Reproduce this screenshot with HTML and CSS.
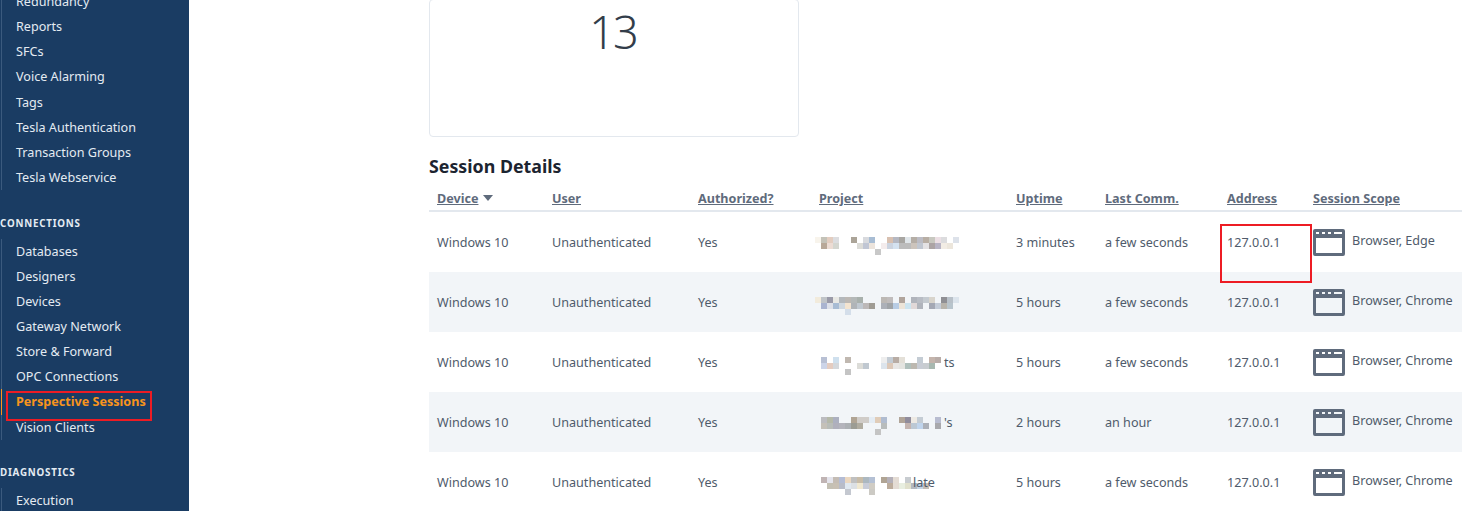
FILE: index.html
```html
<!DOCTYPE html>
<html lang="en">
<head>
<meta charset="UTF-8" />
<title>Perspective Sessions</title>
<link rel="stylesheet" href="styles.css">
</head>
<body>
  <svg class="defs"><symbol id="window" viewBox="0 0 32 27"><path fill-rule="evenodd" d="M2 0h28a2 2 0 0 1 2 2v23a2 2 0 0 1-2 2H2a2 2 0 0 1-2-2V2a2 2 0 0 1 2-2zM3 3v2h3V3zM9 3v2h3V3zM15 3v2h3V3zM21 3v2h8V3zM3 9v15h26V9z"/></symbol></svg>

  <!-- SIDEBAR -->
  <nav class="sidebar">
    <ul class="nav-list first">
      <li>Redundancy</li>
      <li>Reports</li>
      <li>SFCs</li>
      <li>Voice Alarming</li>
      <li>Tags</li>
      <li>Tesla Authentication</li>
      <li>Transaction Groups</li>
      <li>Tesla Webservice</li>
    </ul>
    <div class="nav-title">CONNECTIONS</div>
    <ul class="nav-list">
      <li>Databases</li>
      <li>Designers</li>
      <li>Devices</li>
      <li>Gateway Network</li>
      <li>Store &amp; Forward</li>
      <li>OPC Connections</li>
      <li class="active">Perspective Sessions<span class="mark mark-nav"></span></li>
      <li>Vision Clients</li>
    </ul>
    <div class="nav-title">DIAGNOSTICS</div>
    <ul class="nav-list">
      <li>Execution</li>
    </ul>
  </nav>

  <!-- MAIN -->
  <main class="content">
    <div class="card"><span class="card-value">13</span></div>
    <h2 class="section-title">Session Details</h2>

    <table class="sessions">
      <colgroup>
        <col class="c-device"><col class="c-user"><col class="c-auth"><col class="c-project">
        <col class="c-uptime"><col class="c-comm"><col class="c-addr"><col class="c-scope">
      </colgroup>
      <thead>
        <tr>
          <th><a>Device</a><span class="sort"></span></th>
          <th><a>User</a></th>
          <th><a>Authorized?</a></th>
          <th><a>Project</a></th>
          <th><a>Uptime</a></th>
          <th><a>Last Comm.</a></th>
          <th><a>Address</a></th>
          <th><a>Session Scope</a></th>
        </tr>
      </thead>
      <tbody>
        <tr>
          <td>Windows 10</td><td>Unauthenticated</td><td>Yes</td>
          <td class="project">
            <svg class="mosaic" width="144" height="18" viewBox="0 0 144 18">
              <rect x="0" y="0" fill="#f8f4ec"/><rect x="6" y="0" fill="#c4c2b8"/><rect x="12" y="0" fill="#e3cdc0"/><rect x="18" y="0" fill="#dcdde0"/><rect x="36" y="0" fill="#aba498"/><rect x="48" y="0" fill="#d8dade"/><rect x="54" y="0" fill="#a8bdd4"/><rect x="72" y="0" fill="#d8c0b0"/><rect x="78" y="0" fill="#b5b8c2"/><rect x="84" y="0" fill="#a8a6a2"/><rect x="90" y="0" fill="#e0e6ea"/><rect x="96" y="0" fill="#b5aea6"/><rect x="102" y="0" fill="#bcbcc4"/><rect x="108" y="0" fill="#b8aea4"/><rect x="114" y="0" fill="#c8c8c0"/><rect x="120" y="0" fill="#ecdfe4"/><rect x="126" y="0" fill="#dcdcde"/><rect x="138" y="0" fill="#dde2ea"/>
              <rect x="6" y="6" fill="#b8a898"/><rect x="12" y="6" fill="#ecdcd4"/><rect x="18" y="6" fill="#d4d6d0"/><rect x="42" y="6" fill="#dcdcd8"/><rect x="48" y="6" fill="#c0c6d4"/><rect x="54" y="6" fill="#ece4dc"/><rect x="66" y="6" fill="#f4ecec"/><rect x="72" y="6" fill="#ccd4e0"/><rect x="78" y="6" fill="#d4e2f0"/><rect x="84" y="6" fill="#bcbcbc"/><rect x="90" y="6" fill="#bcbcbc"/><rect x="96" y="6" fill="#ccc4bc"/><rect x="102" y="6" fill="#c0c6d0"/><rect x="108" y="6" fill="#e4e2e4"/><rect x="114" y="6" fill="#aca4a4"/><rect x="120" y="6" fill="#b8b4c4"/><rect x="126" y="6" fill="#f2ece4"/><rect x="132" y="6" fill="#ece6dc"/>
              <rect x="60" y="12" fill="#c8c8c8"/>
            </svg>
          </td>
          <td>3 minutes</td><td>a few seconds</td><td class="addr">127.0.0.1<span class="mark mark-addr"></span></td>
          <td><div class="scope"><svg class="window"><use href="#window"/></svg><span>Browser, Edge</span></div></td>
        </tr>
        <tr>
          <td>Windows 10</td><td>Unauthenticated</td><td>Yes</td>
          <td class="project">
            <svg class="mosaic" width="144" height="18" viewBox="0 0 144 18">
              <rect x="0" y="0" fill="#f2ebdc"/><rect x="6" y="0" fill="#c0c4c8"/><rect x="12" y="0" fill="#9a9aa8"/><rect x="18" y="0" fill="#e8e8e4"/><rect x="24" y="0" fill="#b4b8bc"/><rect x="30" y="0" fill="#bcb8b4"/><rect x="36" y="0" fill="#b4b8b8"/><rect x="42" y="0" fill="#a8b0ac"/><rect x="66" y="0" fill="#bcb8b4"/><rect x="72" y="0" fill="#c0bcbc"/><rect x="84" y="0" fill="#b0a49c"/><rect x="96" y="0" fill="#b0b4bc"/><rect x="102" y="0" fill="#b8bcc4"/><rect x="108" y="0" fill="#c4cad0"/><rect x="114" y="0" fill="#d8d4cc"/><rect x="126" y="0" fill="#8f8f94"/><rect x="132" y="0" fill="#b8c0c8"/><rect x="138" y="0" fill="#dce4ec"/>
              <rect x="6" y="6" fill="#aab4d0"/><rect x="12" y="6" fill="#dde0e8"/><rect x="18" y="6" fill="#a8bcd4"/><rect x="24" y="6" fill="#d0d8e0"/><rect x="30" y="6" fill="#f4e4d0"/><rect x="36" y="6" fill="#b0b4b8"/><rect x="42" y="6" fill="#c0c8d0"/><rect x="48" y="6" fill="#bcb8b8"/><rect x="54" y="6" fill="#a09c94"/><rect x="66" y="6" fill="#acb0b8"/><rect x="72" y="6" fill="#a0a4a8"/><rect x="78" y="6" fill="#b8cce4"/><rect x="84" y="6" fill="#ece4d8"/><rect x="90" y="6" fill="#cce4f0"/><rect x="96" y="6" fill="#e0d8d8"/><rect x="102" y="6" fill="#b0b4bc"/><rect x="114" y="6" fill="#a4a8b4"/><rect x="120" y="6" fill="#c4ccd8"/><rect x="126" y="6" fill="#b8b4ac"/><rect x="132" y="6" fill="#b8c4cc"/>
              <rect x="30" y="12" fill="#d4deea"/>
            </svg>
          </td>
          <td>5 hours</td><td>a few seconds</td><td>127.0.0.1</td>
          <td><div class="scope"><svg class="window"><use href="#window"/></svg><span>Browser, Chrome</span></div></td>
        </tr>
        <tr>
          <td>Windows 10</td><td>Unauthenticated</td><td>Yes</td>
          <td class="project">
            <svg class="mosaic" width="126" height="18" viewBox="0 0 126 18">
              <rect x="6" y="0" fill="#b8c0d4"/><rect x="18" y="0" fill="#cfe0ee"/><rect x="30" y="0" fill="#c0b8b0"/><rect x="66" y="0" fill="#eeeeee"/><rect x="72" y="0" fill="#c4ccd4"/><rect x="78" y="0" fill="#b8aca4"/><rect x="84" y="0" fill="#e4e0d8"/><rect x="102" y="0" fill="#c4ccd4"/><rect x="114" y="0" fill="#c4b4ac"/><rect x="120" y="0" fill="#b8aca8"/>
              <rect x="6" y="6" fill="#ccd4e8"/><rect x="12" y="6" fill="#e4ccc0"/><rect x="18" y="6" fill="#d4d8dc"/><rect x="42" y="6" fill="#dcdcd8"/><rect x="48" y="6" fill="#c0c8d0"/><rect x="66" y="6" fill="#dce4ec"/><rect x="72" y="6" fill="#dcc8b8"/><rect x="78" y="6" fill="#e8e6e4"/><rect x="84" y="6" fill="#e4e4e0"/><rect x="90" y="6" fill="#b0c0bc"/><rect x="96" y="6" fill="#bcb8b0"/><rect x="102" y="6" fill="#c8ccd4"/><rect x="108" y="6" fill="#c8ccd0"/><rect x="114" y="6" fill="#a8b8b0"/>
              <rect x="30" y="12" fill="#c4c4c4"/>
            </svg><span class="leak">ts</span>
          </td>
          <td>5 hours</td><td>a few seconds</td><td>127.0.0.1</td>
          <td><div class="scope"><svg class="window"><use href="#window"/></svg><span>Browser, Chrome</span></div></td>
        </tr>
        <tr>
          <td>Windows 10</td><td>Unauthenticated</td><td>Yes</td>
          <td class="project">
            <svg class="mosaic" width="126" height="18" viewBox="0 0 126 18">
              <rect x="6" y="0" fill="#bcbcc0"/><rect x="12" y="0" fill="#b4b8a8"/><rect x="18" y="0" fill="#acb0c0"/><rect x="36" y="0" fill="#b0a494"/><rect x="42" y="0" fill="#d0ccc8"/><rect x="48" y="0" fill="#d0ccc8"/><rect x="54" y="0" fill="#e4ecf4"/><rect x="60" y="0" fill="#e0ccb8"/><rect x="66" y="0" fill="#b0bcd0"/><rect x="84" y="0" fill="#b0a498"/><rect x="90" y="0" fill="#908c9c"/><rect x="96" y="0" fill="#eeeae4"/><rect x="102" y="0" fill="#c4ccd4"/><rect x="120" y="0" fill="#b8bcd0"/>
              <rect x="6" y="6" fill="#c4c0b8"/><rect x="12" y="6" fill="#b8bcb8"/><rect x="18" y="6" fill="#b0b0bc"/><rect x="24" y="6" fill="#b4b4bc"/><rect x="30" y="6" fill="#acb0b4"/><rect x="36" y="6" fill="#9c9c94"/><rect x="42" y="6" fill="#b0aca0"/><rect x="66" y="6" fill="#b8bcbc"/><rect x="90" y="6" fill="#c4b4b0"/><rect x="96" y="6" fill="#bcc8d4"/><rect x="102" y="6" fill="#c0d4ec"/><rect x="108" y="6" fill="#acb0b8"/><rect x="120" y="6" fill="#a8a8ac"/>
              <rect x="60" y="12" fill="#c4c4c4"/>
            </svg><span class="leak">'s</span>
          </td>
          <td>2 hours</td><td>an hour</td><td>127.0.0.1</td>
          <td><div class="scope"><svg class="window"><use href="#window"/></svg><span>Browser, Chrome</span></div></td>
        </tr>
        <tr>
          <td>Windows 10</td><td>Unauthenticated</td><td>Yes</td>
          <td class="project">
            <svg class="mosaic" width="120" height="18" viewBox="0 0 120 18">
              <rect x="6" y="0" fill="#c0b4b4"/><rect x="12" y="0" fill="#e4e4ec"/><rect x="18" y="0" fill="#c4bcb4"/><rect x="24" y="0" fill="#b4bcd4"/><rect x="30" y="0" fill="#ecd8c0"/><rect x="36" y="0" fill="#c0c0c0"/><rect x="42" y="0" fill="#c8bca8"/><rect x="48" y="0" fill="#acb8c0"/><rect x="54" y="0" fill="#b4c0d4"/><rect x="66" y="0" fill="#b0a494"/><rect x="72" y="0" fill="#b4b0b8"/><rect x="78" y="0" fill="#e4dcd4"/><rect x="90" y="0" fill="#c8ccd0"/>
              <rect x="12" y="6" fill="#c4c0b4"/><rect x="18" y="6" fill="#c8c0b4"/><rect x="24" y="6" fill="#b8bcc8"/><rect x="30" y="6" fill="#e0e8f0"/><rect x="36" y="6" fill="#dce0e4"/><rect x="42" y="6" fill="#f0e8d0"/><rect x="48" y="6" fill="#c8ccd8"/><rect x="54" y="6" fill="#d0ccc4"/><rect x="72" y="6" fill="#bcac9c"/><rect x="78" y="6" fill="#e4dcd4"/><rect x="84" y="6" fill="#e8eee0"/><rect x="90" y="6" fill="#e0e0cc"/><rect x="96" y="6" fill="#b4b8c0"/><rect x="102" y="6" fill="#c4d4e4"/><rect x="108" y="6" fill="#c4bcb4"/>
              <rect x="30" y="12" fill="#c4c8d0"/><rect x="54" y="12" fill="#cccac4"/>
            </svg><span class="leak leak-over">late</span>
          </td>
          <td>5 hours</td><td>a few seconds</td><td>127.0.0.1</td>
          <td><div class="scope"><svg class="window"><use href="#window"/></svg><span>Browser, Chrome</span></div></td>
        </tr>
      </tbody>
    </table>
  </main>
</body>
</html>
```

FILE: styles.css
```css
:root {
  --navy: #1a3c63;
  --text: #4f5b6b;
  --slate: #5f6b7c;
  --stripe: #f2f5f8;
  --line: #e3e8ee;
  --red: #ed1c24;
  --font: 'Noto Sans', sans-serif;
}

* {
  box-sizing: border-box;
}

html,
body {
  margin: 0;
  padding: 0;
  height: 511px;
  overflow: hidden;
  background: #fff;
  font-family: var(--font);
  font-size: 12.6px;
  color: var(--text);
}

body {
  display: flex;
}

.defs { display: none; }

/* ------------ SIDEBAR ------------- */
.sidebar {
  flex: 0 0 189px;
  height: 511px;
  overflow: hidden;
  background: var(--navy);
  color: #e4ebf2;
}

.nav-list {
  list-style: none;
  margin: 0 0 0 1px;
  padding: 0;
  border-left: 1px solid #3b5a7e;
}
.nav-list.first { margin-top: -11px; }
.nav-list li {
  position: relative;
  height: 25.15px;
  line-height: 25px;
  padding-left: 14px;
  white-space: nowrap;
}
.nav-list li.active {
  color: #f7941d;
  font-weight: 700;
  box-shadow: -1px 0 0 #f7941d;
}

.nav-title {
  height: 33px;
  margin-top: 16.5px;
  margin-bottom: -1px;
  line-height: 33px;
  font-size: 9.8px;
  font-weight: 700;
  letter-spacing: 0.08em;
  white-space: nowrap;
}

/* red annotation boxes */
.mark {
  position: absolute;
  border: 2px solid var(--red);
  pointer-events: none;
}
.mark-nav {
  left: 4px;
  top: 2px;
  width: 146px;
  height: 30px;
}
.mark-addr {
  left: 1px;
  top: 12px;
  width: 92px;
  height: 59px;
}

/* ------------ MAIN ------------- */
.content {
  flex: 1;
  min-width: 0;
  padding-left: 240px;
}

.card {
  width: 370px;
  height: 138px;
  margin-top: -1px;
  padding-right: 2px;
  border: 1px solid var(--line);
  border-radius: 4px;
  text-align: center;
}
.card-value {
  display: block;
  font-size: 45px;
  font-weight: 300;
  line-height: 64px;
  letter-spacing: -2px;
  color: #333d4a;
}

.section-title {
  margin: 16px 0 0;
  height: 27px;
  line-height: 27px;
  font-size: 17.8px;
  font-weight: 700;
  color: #1c2430;
}

.sessions {
  width: 1033px;
  table-layout: fixed;
  border-collapse: separate;
  border-spacing: 0;
}
.c-device { width: 115px; }
.c-user { width: 146px; }
.c-auth { width: 121px; }
.c-project { width: 197px; }
.c-uptime { width: 89px; }
.c-comm { width: 122px; }
.c-addr { width: 86px; }
.c-scope { width: 157px; }

.sessions th {
  height: 32px;
  padding: 7px 8px 0;
  border-bottom: 2px solid var(--line);
  text-align: left;
  font-weight: 700;
  color: var(--slate);
  white-space: nowrap;
}
.sessions th a { text-decoration: underline; }
.sort {
  display: inline-block;
  margin-left: 5px;
  vertical-align: 2px;
  border-left: 5px solid transparent;
  border-right: 5px solid transparent;
  border-top: 6px solid var(--slate);
}

.sessions td {
  height: 60px;
  padding: 0 8px;
  white-space: nowrap;
}
.sessions tbody tr:nth-child(even) { background: var(--stripe); }
.sessions td.addr { position: relative; }

.mosaic {
  display: inline-block;
  vertical-align: middle;
  margin: 8px 0 0 -4px;
  shape-rendering: crispEdges;
}
.mosaic rect {
  width: 6px;
  height: 6px;
}
.leak { vertical-align: middle; margin-left: 3px; }
.leak-over { margin-left: -22px; }

.scope {
  display: flex;
  align-items: flex-start;
  gap: 7px;
}
.scope span {
  padding-top: 1px;
  line-height: 22px;
}
.window {
  flex: none;
  width: 32px;
  height: 27px;
  fill: var(--slate);
}
```
